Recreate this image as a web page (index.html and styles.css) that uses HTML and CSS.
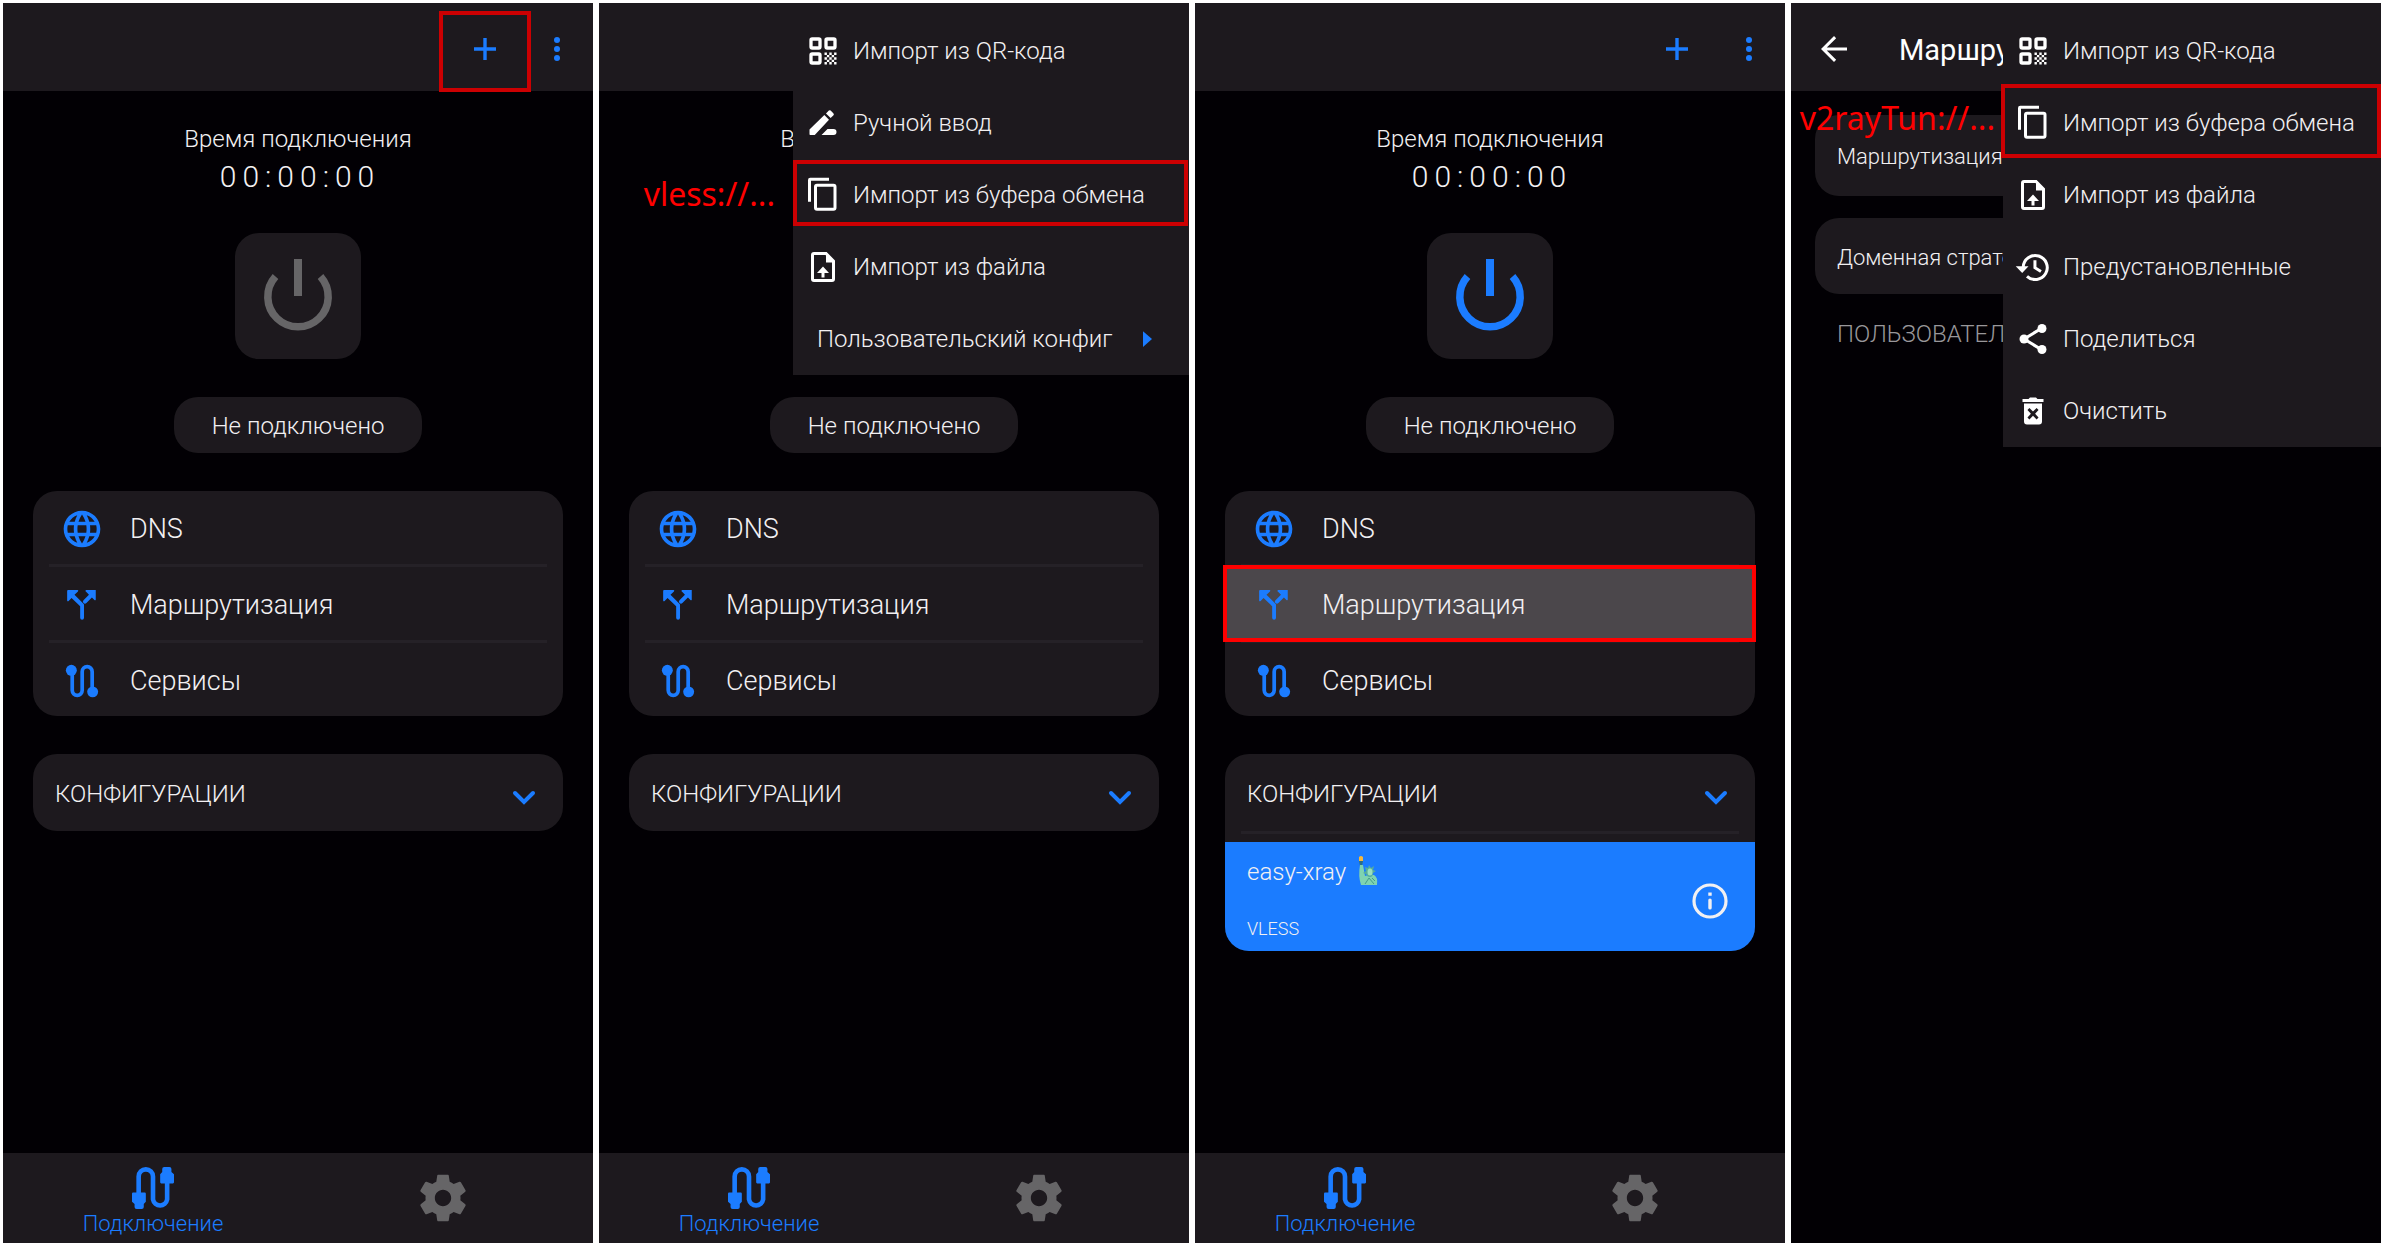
FILE: index.html
```html
<!DOCTYPE html>
<html lang="ru">
<head>
<meta charset="utf-8">
<meta name="viewport" content="width=device-width, initial-scale=1">
<title>v2rayTun — настройка</title>
<link rel="stylesheet" href="styles.css">
</head>
<body>
<svg class="sprite" aria-hidden="true">
  <symbol id="plus" viewBox="0 0 24 24"><path d="M12 1v22M1 12h22" fill="none" stroke="currentColor" stroke-width="3.4"/></symbol>
  <symbol id="dots" viewBox="0 0 24 24"><circle cx="12" cy="3" r="3"/><circle cx="12" cy="12" r="3"/><circle cx="12" cy="21" r="3"/></symbol>
  <symbol id="power" viewBox="0 0 80 80"><path d="M17.5 20.500A30.200 30.200 0 1 0 62.500 20.500" fill="none" stroke="currentColor" stroke-width="7.500"/><path d="M36 3h8v37h-8z"/></symbol>
  <symbol id="globe" viewBox="0 0 24 24"><path d="M11.99 2C6.47 2 2 6.480 2 12s4.470 10 9.990 10C17.520 22 22 17.520 22 12S17.520 2 11.990 2zm6.930 6h-2.950c-.32-1.250-.78-2.450-1.380-3.560 1.840.63 3.370 1.910 4.330 3.560zM12 4.040c.83 1.200 1.480 2.530 1.910 3.960h-3.820c.43-1.430 1.080-2.760 1.910-3.960zM4.260 14C4.100 13.360 4 12.690 4 12s.1-1.360.26-2h3.380c-.08.66-.14 1.320-.14 2s.06 1.340.14 2H4.260zm.82 2h2.950c.32 1.250.78 2.450 1.380 3.560-1.840-.63-3.370-1.900-4.330-3.560zm2.950-8H5.080c.96-1.660 2.490-2.930 4.330-3.560C8.810 5.550 8.350 6.750 8.030 8zM12 19.960c-.83-1.200-1.480-2.530-1.910-3.960h3.820c-.43 1.430-1.080 2.760-1.910 3.960zM14.340 14H9.660c-.09-.66-.16-1.320-.16-2s.07-1.350.16-2h4.680c.09.65.16 1.320.16 2s-.07 1.340-.16 2zm.25 5.560c.6-1.110 1.060-2.310 1.380-3.560h2.950c-.96 1.650-2.490 2.930-4.330 3.560zM16.360 14c.08-.66.14-1.320.14-2s-.06-1.340-.14-2h3.380c.16.64.26 1.310.26 2s-.1 1.360-.26 2h-3.380z"/></symbol>
  <symbol id="split" viewBox="0 0 24 24"><path d="M14.500 3.800h5v5.200a.4.4 0 0 1-.7.300l-1.400-1.400-3 3a1 1 0 0 1-1.600-1.500l3-3-1.700-1.700a.5.500 0 0 1 .4-.9zM9.600 3.800H4.400a.5.500 0 0 0-.5.500v5.200c0 .5.500.6.800.300l1.600-1.600L11 12.700V19a1 1 0 0 0 2.100 0v-7a1 1 0 0 0-.3-.7L7.900 6.400 9.800 4.600a.5.500 0 0 0-.2-.8z"/></symbol>
  <symbol id="route" viewBox="-6 -6 45 45"><path d="M6.500 6v20a5 5 0 0 0 10.200 0V7a5 5 0 0 1 10.200 0v20" fill="none" stroke="currentColor" stroke-width="3.800"/><circle cx="5.600" cy="5.600" r="5.600"/><circle cx="27.400" cy="27.600" r="5.600"/></symbol>
  <symbol id="chevron" viewBox="0 0 24 24"><path d="M3 11l9 9 9-9" fill="none" stroke="currentColor" stroke-width="4" stroke-linecap="round"/></symbol>
  <symbol id="cable" viewBox="0 0 41 41"><path d="M6.500 26V9.300a7 7 0 0 1 14 0v22.400a7 7 0 0 0 13.800 0V14" fill="none" stroke="currentColor" stroke-width="4.500"/><path d="M1 25h11.500q1 0 1 1v8l-2 2v3q0 2-2 2H4.500q-2 0-2-2v-3l-2.500-2v-8q0-1 1-1zM31.500 0h5q2 0 2 2v3l2.500 2v8q0 1-1 1H28.500q-1 0-1-1V7l2-2V2q0-2 2-2z"/></symbol>
  <symbol id="gear" viewBox="0 0 24 24"><path d="M19.430 12.980c.04-.32.07-.64.07-.98s-.03-.66-.07-.98l2.110-1.650c.19-.15.24-.42.12-.64l-2-3.460c-.12-.22-.39-.3-.61-.22l-2.490 1c-.52-.4-1.080-.73-1.690-.98l-.38-2.650C14.460 2.180 14.250 2 14 2h-4c-.25 0-.46.18-.49.42l-.38 2.650c-.61.25-1.170.59-1.690.98l-2.490-1c-.23-.09-.49 0-.61.22l-2 3.460c-.13.22-.07.49.12.64l2.110 1.650c-.04.32-.07.65-.07.98s.03.66.07.98l-2.110 1.650c-.19.15-.24.42-.12.64l2 3.460c.12.22.39.3.61.22l2.490-1c.52.4 1.080.73 1.690.98l.38 2.650c.03.24.24.42.49.42h4c.25 0 .46-.18.49-.42l.38-2.650c.61-.25 1.170-.59 1.690-.98l2.490 1c.23.09.49 0 .61-.22l2-3.460c.12-.22.07-.49-.12-.64l-2.110-1.650zM12 15.500c-1.930 0-3.500-1.570-3.500-3.500s1.570-3.500 3.500-3.500 3.500 1.570 3.500 3.500-1.570 3.500-3.500 3.500z"/></symbol>
  <symbol id="qr" viewBox="0 0 24 24"><g fill="none" stroke="currentColor" stroke-width="2.200"><rect x="4" y="4" width="6" height="6" rx=".8"/><rect x="14" y="4" width="6" height="6" rx=".8"/><rect x="4" y="14" width="6" height="6" rx=".8"/></g><path d="M13 13h1.600v1.600H13zM16.200 13h1.600v1.600h-1.600zM14.600 14.600h1.600v1.600h-1.600zM17.800 14.600h1.600v1.600h-1.600zM13 16.200h1.600v1.600H13zM16.200 16.200h1.600v1.600h-1.600zM19.400 13H21v1.600h-1.600zM19.400 16.200H21v1.600h-1.600zM14.600 17.800h1.600v1.600h-1.600zM17.800 17.800h1.600v1.600h-1.600zM13 19.400h1.600V21H13zM16.200 19.400h1.600V21h-1.600zM19.400 19.400H21V21h-1.600z"/></symbol>
  <symbol id="pencil" viewBox="0 0 24 24"><path d="M3 16.500V19.500q0 .5.500.5h3L16 9.800 12.900 6.700 3.500 15.900q-.5.300-.5.600zM14 5.600l3.100 3.100L19 6.800q.5-.6 0-1.200l-1.900-1.900q-.6-.5-1.200 0zM11 20l4-4h4a2 2 0 0 1 0 4z"/></symbol>
  <symbol id="copy" viewBox="0 0 24 24"><path d="M16 .5H3.500Q2 .5 2 2v14.500h2v-14h12z"/><rect x="7" y="5.500" width="13" height="16" rx="1" fill="none" stroke="currentColor" stroke-width="2"/></symbol>
  <symbol id="file" viewBox="0 0 24 24"><path d="M14 3H6q-1 0-1 1v16q0 1 1 1h12q1 0 1-1V8z" fill="none" stroke="currentColor" stroke-width="2"/><path d="M14 2v7h6zM11 19v-3H8l4-4.300 4 4.300h-3v3z"/></symbol>
  <symbol id="history" viewBox="0 0 24 24"><path d="M5.500 12a8 8 0 1 1 2.500 6.200M13.300 7.500v5l4 2.500" fill="none" stroke="currentColor" stroke-width="2"/><path d="M.5 11.500h8.500l-4.200 4.500z"/></symbol>
  <symbol id="share" viewBox="0 0 24 24"><path d="M17.500 5L6 12l11.500 7" fill="none" stroke="currentColor" stroke-width="2"/><circle cx="18" cy="5" r="3"/><circle cx="6" cy="12" r="3"/><circle cx="18" cy="19" r="3"/></symbol>
  <symbol id="trash" viewBox="0 0 24 24"><path fill-rule="evenodd" d="M5 4h4l1-1h4l1 1h4v2H5zM6 7h12v12q0 2-2 2H8q-2 0-2-2zM9.600 10L8.300 11.300l2.300 2.500-2.300 2.500 1.300 1.300 2.400-2.400 2.400 2.400 1.300-1.300-2.300-2.500 2.300-2.500L14.400 10 12 12.400z"/></symbol>
  <symbol id="back" viewBox="0 0 24 24"><path d="M24 12H2M13 1L2 12l11 11" fill="none" stroke="currentColor" stroke-width="2.800"/></symbol>
  <symbol id="info" viewBox="0 0 36 36"><circle cx="18" cy="18" r="16" fill="none" stroke="currentColor" stroke-width="3.200"/><path d="M16.300 9.500h3.400v3.300h-3.400zM16.300 17q0-1.500 1.700-1.500t1.700 1.500v8q0 1.500-1.700 1.500T16.300 25z"/></symbol>
  <symbol id="arrow" viewBox="0 0 8 14"><path d="M0 0l8 7-8 7z"/></symbol>
</svg>

<main class="board">
  <section class="phone">
    <header class="bar">
      <button class="bar-btn" aria-label="Добавить"><svg class="bar-icon"><use href="#plus"/></svg><span class="mark mark-plus"></span></button>
      <button class="bar-btn" aria-label="Меню"><svg class="bar-icon"><use href="#dots"/></svg></button>
    </header>
    <div class="content">
      <p class="time-label">Время подключения</p>
      <p class="time">00:00:00</p>
      <button class="power" aria-label="Подключить"><svg><use href="#power"/></svg></button>
      <p class="status">Не подключено</p>
      <div class="card">
        <a class="row" href="#"><svg class="row-icon"><use href="#globe"/></svg>DNS</a>
        <hr class="divider">
        <a class="row" href="#"><svg class="row-icon"><use href="#split"/></svg>Маршрутизация</a>
        <hr class="divider">
        <a class="row" href="#"><svg class="row-icon"><use href="#route"/></svg>Сервисы</a>
      </div>
      <div class="card">
        <button class="configs">КОНФИГУРАЦИИ<svg class="chevron"><use href="#chevron"/></svg></button>
      </div>
    </div>
    <nav class="tabs">
      <a class="tab" href="#"><svg class="tab-icon"><use href="#cable"/></svg>Подключение</a>
      <a class="tab tab-off" href="#" aria-label="Настройки"><svg class="gear"><use href="#gear"/></svg></a>
    </nav>
  </section>

  <section class="phone">
    <header class="bar"></header>
    <div class="content">
      <p class="time-label">Время подключения</p>
      <p class="time">00:00:00</p>
      <button class="power" aria-label="Подключить"><svg><use href="#power"/></svg></button>
      <p class="status">Не подключено</p>
      <div class="card">
        <a class="row" href="#"><svg class="row-icon"><use href="#globe"/></svg>DNS</a>
        <hr class="divider">
        <a class="row" href="#"><svg class="row-icon"><use href="#split"/></svg>Маршрутизация</a>
        <hr class="divider">
        <a class="row" href="#"><svg class="row-icon"><use href="#route"/></svg>Сервисы</a>
      </div>
      <div class="card">
        <button class="configs">КОНФИГУРАЦИИ<svg class="chevron"><use href="#chevron"/></svg></button>
      </div>
    </div>
    <nav class="tabs">
      <a class="tab" href="#"><svg class="tab-icon"><use href="#cable"/></svg>Подключение</a>
      <a class="tab tab-off" href="#" aria-label="Настройки"><svg class="gear"><use href="#gear"/></svg></a>
    </nav>
    <div class="menu menu-add">
      <button class="item"><svg class="item-icon"><use href="#qr"/></svg>Импорт из QR-кода</button>
      <button class="item"><svg class="item-icon"><use href="#pencil"/></svg>Ручной ввод</button>
      <button class="item"><svg class="item-icon"><use href="#copy"/></svg>Импорт из буфера обмена<span class="mark mark-item"></span><span class="note">vless://...</span></button>
      <button class="item"><svg class="item-icon"><use href="#file"/></svg>Импорт из файла</button>
      <button class="item item-sub">Пользовательский конфиг<svg class="arrow"><use href="#arrow"/></svg></button>
    </div>
  </section>

  <section class="phone">
    <header class="bar">
      <button class="bar-btn" aria-label="Добавить"><svg class="bar-icon"><use href="#plus"/></svg></button>
      <button class="bar-btn" aria-label="Меню"><svg class="bar-icon"><use href="#dots"/></svg></button>
    </header>
    <div class="content">
      <p class="time-label">Время подключения</p>
      <p class="time">00:00:00</p>
      <button class="power power-ready" aria-label="Подключить"><svg><use href="#power"/></svg></button>
      <p class="status">Не подключено</p>
      <div class="card">
        <a class="row" href="#"><svg class="row-icon"><use href="#globe"/></svg>DNS</a>
        <hr class="divider">
        <a class="row row-active" href="#"><svg class="row-icon"><use href="#split"/></svg>Маршрутизация<span class="mark mark-row"></span></a>
        <hr class="divider">
        <a class="row" href="#"><svg class="row-icon"><use href="#route"/></svg>Сервисы</a>
      </div>
      <div class="card">
        <button class="configs">КОНФИГУРАЦИИ<svg class="chevron"><use href="#chevron"/></svg></button>
        <hr class="divider">
        <div class="server">
          <div class="server-text">
            <p class="server-name">easy-xray
              <svg class="statue" viewBox="0 0 20 30" role="img" aria-label="Статуя Свободы"><path d="M1 5h4l-1 5H2z" fill="#2b6f86"/><path d="M1 1q2-2 4 0v4H1z" fill="#f5b83d"/><path d="M2 9h3l2 11 4-1h5q4 2 3 10H3Q0 20 2 9z" fill="#7fd3b0"/><path d="M7 11l3 1 1-3 2 3 3-2-1 4 3 1-3 2q0 4-3 4t-4-3l-3-1 3-2z" fill="#55ad9c"/><ellipse cx="12" cy="16" rx="2.500" ry="3.500" fill="#9ae0bd"/><path d="M7 28l4-6 5 6M14 22l3 3" fill="none" stroke="#459c8b" stroke-width="1"/></svg>
            </p>
            <p class="server-type">VLESS</p>
          </div>
          <button class="info" aria-label="Информация"><svg><use href="#info"/></svg></button>
        </div>
      </div>
    </div>
    <nav class="tabs">
      <a class="tab" href="#"><svg class="tab-icon"><use href="#cable"/></svg>Подключение</a>
      <a class="tab tab-off" href="#" aria-label="Настройки"><svg class="gear"><use href="#gear"/></svg></a>
    </nav>
  </section>

  <section class="phone">
    <header class="bar bar-title">
      <button class="back" aria-label="Назад"><svg><use href="#back"/></svg></button>
      <h1 class="title">Маршрутизация</h1>
    </header>
    <div class="settings">
      <div class="card setting setting-tall">Маршрутизация</div>
      <div class="card setting">Доменная стратегия</div>
      <h2 class="group">ПОЛЬЗОВАТЕЛЬСКИЕ</h2>
    </div>
    <div class="menu menu-routes">
      <button class="item"><svg class="item-icon"><use href="#qr"/></svg>Импорт из QR-кода</button>
      <button class="item"><svg class="item-icon"><use href="#copy"/></svg>Импорт из буфера обмена<span class="mark mark-item mark-tall"></span><span class="note">v2rayTun://...</span></button>
      <button class="item"><svg class="item-icon"><use href="#file"/></svg>Импорт из файла</button>
      <button class="item"><svg class="item-icon"><use href="#history"/></svg>Предустановленные</button>
      <button class="item"><svg class="item-icon"><use href="#share"/></svg>Поделиться</button>
      <button class="item"><svg class="item-icon"><use href="#trash"/></svg>Очистить</button>
    </div>
  </section>
</main>
</body>
</html>
```
FILE: styles.css
```css
:root {
  --surface: #1d191e;
  --page: #020004;
  --blue: #1b7cff;
  --text: #f2f0f2;
}

* {
  box-sizing: border-box;
}

body,
p,
h1,
h2 {
  margin: 0;
}

body {
  background: #fff;
  color: var(--text);
  font: 300 24px/32px Roboto, "Open Sans", sans-serif;
}

button {
  padding: 0;
  border: 0;
  background: none;
  color: inherit;
  font: inherit;
  text-align: left;
}

a {
  color: inherit;
  text-decoration: none;
}

svg {
  display: block;
  flex: none;
  fill: currentColor;
}

.sprite {
  position: absolute;
  width: 0;
  height: 0;
}

.board {
  display: grid;
  grid-template-columns: repeat(4, minmax(0, 1fr));
  gap: 6px;
  min-height: 100vh;
  padding: 3px;
}

.phone {
  position: relative;
  display: flex;
  flex-direction: column;
  background: var(--page);
}

/* Top bar */
.bar {
  display: flex;
  justify-content: flex-end;
  height: 88px;
  padding-top: 8px;
  background: var(--surface);
  color: var(--blue);
}

.bar-btn {
  position: relative;
  display: grid;
  place-items: center;
  width: 72px;
  height: 76px;
}

.bar-icon {
  width: 24px;
  height: 24px;
}

.bar-title {
  align-items: center;
  justify-content: flex-start;
  gap: 52px;
  padding: 4px 30px 0;
  color: #fff;
}

.back svg {
  width: 26px;
  height: 26px;
}

.title {
  padding-top: 2px;
  font-size: 29px;
  font-weight: 400;
}

/* Connection screen */
.content {
  display: flex;
  flex: 1;
  flex-direction: column;
  align-items: center;
  gap: 38px;
  padding: 32px 30px;
}

.time-label {
  margin-bottom: -34px;
}

.time {
  padding-left: 4px;
  font-size: 30px;
  line-height: 36px;
  letter-spacing: 6px;
}

.power {
  display: grid;
  place-items: center;
  width: 126px;
  height: 126px;
  border-radius: 24px;
  background: var(--surface);
  color: #666567;
}

.power svg {
  width: 80px;
  height: 80px;
}

.power-ready {
  color: var(--blue);
}

.status {
  padding: 13px 38px 11px;
  border-radius: 24px;
  background: var(--surface);
}

.card {
  align-self: stretch;
  border-radius: 24px;
  background: var(--surface);
}

.row {
  position: relative;
  display: flex;
  align-items: center;
  gap: 26px;
  height: 73px;
  padding: 2px 27px 0;
  font-size: 27px;
}

.row-active {
  background: #4b474b;
}

.row-icon {
  width: 44px;
  height: 44px;
  color: var(--blue);
}

.divider {
  height: 3px;
  margin: 0 16px;
  border: 0;
  background: #252127;
}

.configs {
  display: flex;
  align-items: center;
  justify-content: space-between;
  width: 100%;
  height: 77px;
  padding: 2px 27px 0 22px;
}

.chevron {
  width: 24px;
  height: 24px;
  color: var(--blue);
}

.server {
  display: flex;
  align-items: center;
  justify-content: space-between;
  margin-top: 8px;
  padding: 14px 27px 6px 22px;
  border-radius: 0 0 24px 24px;
  background: var(--blue);
}

.server-name {
  display: flex;
  gap: 12px;
  padding-bottom: 25px;
}

.server-type {
  font-size: 18px;
}

.statue {
  width: 20px;
  height: 30px;
}

.info svg {
  width: 36px;
  height: 36px;
}

/* Bottom tabs */
.tabs {
  display: grid;
  grid-template-columns: 1fr 1fr;
  height: 90px;
  padding: 0 5px;
  background: var(--surface);
  color: var(--blue);
}

.tab {
  display: flex;
  flex-direction: column;
  align-items: center;
  justify-content: center;
  padding-top: 10px;
  font-size: 22px;
  line-height: 30px;
}

.tab-off {
  padding-top: 0;
  color: #666567;
}

.tab-icon {
  width: 42px;
  height: 42px;
}

.gear {
  width: 56px;
  height: 56px;
}

/* Routing settings screen */
.settings {
  display: flex;
  flex-direction: column;
  gap: 22px;
  padding: 24px;
}

.setting {
  padding: 24px 22px 20px;
  font-size: 22px;
}

.setting-tall {
  padding: 26px 22px 23px;
}

.group {
  padding: 2px 22px;
  color: #99979a;
  font-size: 24px;
  font-weight: 300;
}

/* Drop-down menus */
.menu {
  position: absolute;
  top: 0;
  right: 0;
  padding-top: 12px;
  background: var(--surface);
}

.menu-add {
  width: 396px;
}

.menu-routes {
  width: 378px;
}

.item {
  position: relative;
  display: flex;
  align-items: center;
  gap: 12px;
  width: 100%;
  height: 72px;
  padding: 0 12px;
  white-space: nowrap;
}

.item-icon {
  width: 36px;
  height: 36px;
  color: #fff;
}

.item-sub {
  justify-content: space-between;
  padding: 0 37px 0 24px;
}

.arrow {
  width: 9px;
  height: 16px;
  color: var(--blue);
}

/* Red call-outs */
.mark {
  position: absolute;
  border: 4px solid #cc0002;
}

.mark-plus {
  inset: 0 -10px -5px;
}

.mark-item {
  inset: 1px 1px 5px 0;
}

.mark-tall {
  inset: -3px 0 1px -2px;
}

.mark-row {
  inset: -2px -1px -2px -2px;
  border-color: #f00;
}

.note {
  position: absolute;
  right: 100%;
  padding: 0 18px 2px 0;
  color: #f00;
  font: 400 32px/40px "Noto Sans", sans-serif;
}

.menu-routes .note {
  padding: 0 8px 10px 0;
}
```
